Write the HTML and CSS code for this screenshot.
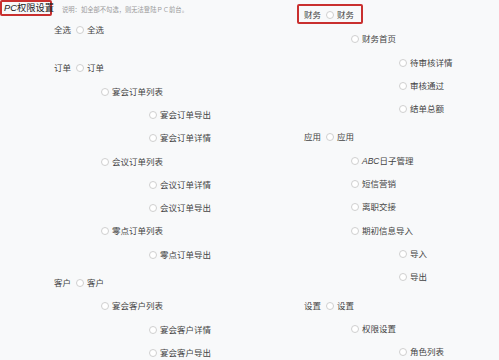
FILE: index.html
```html
<!DOCTYPE html>
<html lang="zh">
<head>
<meta charset="utf-8">
<title>PC权限设置</title>
<link rel="stylesheet" href="styles.css">
</head>
<body>
<div class="page">
  <div class="col col-left">
    <div class="header">
      <span class="title"><i>PC</i>权限设置</span>
      <span class="note">说明：如全部不勾选，则无法登陆ＰＣ前台。</span>
    </div>
    <div class="row top first"><span class="label">全选</span><span class="radio"></span><span class="text">全选</span></div>
    <div class="row top gap-big"><span class="label">订单</span><span class="radio"></span><span class="text">订单</span></div>
    <div class="row l1"><span class="radio"></span><span class="text">宴会订单列表</span></div>
    <div class="row l2"><span class="radio"></span><span class="text">宴会订单导出</span></div>
    <div class="row l2"><span class="radio"></span><span class="text">宴会订单详情</span></div>
    <div class="row l1"><span class="radio"></span><span class="text">会议订单列表</span></div>
    <div class="row l2"><span class="radio"></span><span class="text">会议订单详情</span></div>
    <div class="row l2"><span class="radio"></span><span class="text">会议订单导出</span></div>
    <div class="row l1"><span class="radio"></span><span class="text">零点订单列表</span></div>
    <div class="row l2"><span class="radio"></span><span class="text">零点订单导出</span></div>
    <div class="row top"><span class="label">客户</span><span class="radio"></span><span class="text">客户</span></div>
    <div class="row l1"><span class="radio"></span><span class="text">宴会客户列表</span></div>
    <div class="row l2"><span class="radio"></span><span class="text">宴会客户详情</span></div>
    <div class="row l2"><span class="radio"></span><span class="text">宴会客户导出</span></div>
  </div>
  <div class="col col-right">
    <div class="row top first-right"><span class="hl-box"><span class="label">财务</span><span class="radio"></span><span class="text">财务</span></span></div>
    <div class="row l1"><span class="radio"></span><span class="text">财务首页</span></div>
    <div class="row l2"><span class="radio"></span><span class="text">待审核详情</span></div>
    <div class="row l2"><span class="radio"></span><span class="text">审核通过</span></div>
    <div class="row l2"><span class="radio"></span><span class="text">结单总额</span></div>
    <div class="row top"><span class="label">应用</span><span class="radio"></span><span class="text">应用</span></div>
    <div class="row l1"><span class="radio"></span><span class="text"><i>ABC</i>日子管理</span></div>
    <div class="row l1"><span class="radio"></span><span class="text">短信营销</span></div>
    <div class="row l1"><span class="radio"></span><span class="text">离职交接</span></div>
    <div class="row l1"><span class="radio"></span><span class="text">期初信息导入</span></div>
    <div class="row l2"><span class="radio"></span><span class="text">导入</span></div>
    <div class="row l2"><span class="radio"></span><span class="text">导出</span></div>
    <div class="row top"><span class="label">设置</span><span class="radio"></span><span class="text">设置</span></div>
    <div class="row l1"><span class="radio"></span><span class="text">权限设置</span></div>
    <div class="row l2"><span class="radio"></span><span class="text">角色列表</span></div>
  </div>
</div>
</body>
</html>
```
FILE: styles.css
```css
html, body {
  margin: 0;
  padding: 0;
  background: #f8f9fa;
}
body {
  font-family: "Liberation Sans", "Noto Sans CJK SC", sans-serif;
  color: #444;
  width: 499px;
  height: 360px;
  overflow: hidden;
}
.page {
  display: grid;
  grid-template-columns: 250px 249px;
}
.col {
  display: flex;
  flex-direction: column;
}
.header {
  display: flex;
  align-items: center;
  height: 16px;
}
.title {
  box-sizing: border-box;
  height: 16px;
  width: 52px;
  border: 2px solid #c9302f;
  border-radius: 2px;
  padding: 1px 0 0 2px;
  font-size: 9.3px;
  line-height: 11px;
  color: #222;
  white-space: nowrap;
}
.title i {
  font-style: italic;
}
.note {
  margin-left: 10px;
  margin-top: 2px;
  font-size: 6.3px;
  color: #9a9a9a;
  white-space: nowrap;
}
.row {
  display: flex;
  align-items: center;
  height: 23.3px;
  font-size: 8.5px;
  line-height: 12px;
  white-space: nowrap;
}
.row.top {
  padding-left: 54px;
  margin-top: 5px;
}
.row.first {
  margin-top: 2.4px;
}
.row.gap-big {
  margin-top: 15px;
}
.row.first-right {
  margin-top: 4.3px;
}
.row.l1 {
  padding-left: 101px;
}
.row.l2 {
  padding-left: 149px;
}
.label {
  margin-right: 5px;
}
.radio {
  box-sizing: border-box;
  width: 8px;
  height: 8px;
  border: 1px solid #cfcfcf;
  border-radius: 50%;
  background: #fff;
  margin-right: 3px;
  flex: none;
}
.text i {
  font-style: italic;
}
.hl-box {
  display: flex;
  align-items: center;
  box-sizing: border-box;
  height: 20px;
  margin-left: -7px;
  margin-top: -4px;
  padding: 2px 7px 0 5px;
  border: 2px solid #c9302f;
  border-radius: 2px;
}
```
